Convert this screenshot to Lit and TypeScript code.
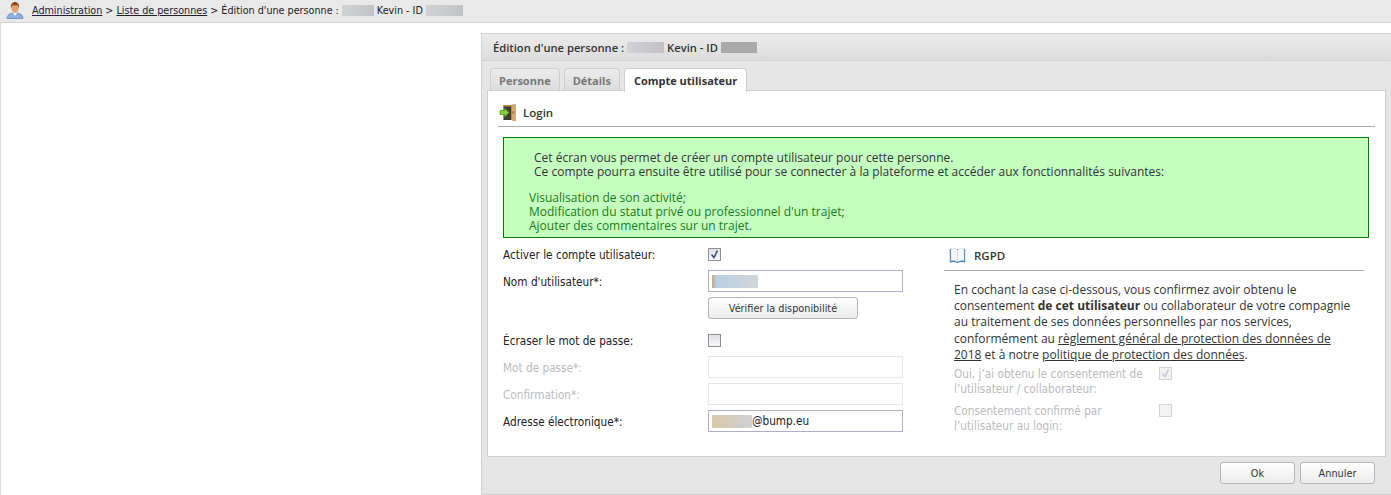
import { LitElement, html, css } from "lit";
import { customElement } from "lit/decorators.js";

@customElement("app-root")
export class AppRoot extends LitElement {
  static styles = css`
    :host { display: block; height: 495px; overflow: hidden; background: #fff; font-family: "Open Sans", sans-serif; font-size: 12px; color: #333; box-sizing: border-box; }
    * { box-sizing: border-box; }
    .crumb { height: 23px; background: #e9e9e9; border-bottom: 1px solid #d4d4d4; display: flex; align-items: center; gap: 8px; padding: 0 0 2px 6px; font-family: "DejaVu Sans Condensed", "DejaVu Sans", sans-serif; font-stretch: condensed; font-size: 10.7px; color: #222; white-space: nowrap; }
    .crumb a { color: #223; text-decoration: underline; }
    .crumb .txt { display: flex; align-items: center; gap: 3px; }
    .blur { display: inline-block; height: 11px; background: linear-gradient(90deg, #d0d2d4, #c0c2c6); filter: blur(.7px); }
    .main { border-left: 1px solid #dedede; height: 472px; padding-top: 10px; }
    .panel { margin-left: 480px; height: 462px; background: #e6e6e6; border: 1px solid #d0d0d0; border-right: none; display: flex; flex-direction: column; }
    .phead { height: 27px; flex: none; padding-left: 11px; display: flex; align-items: center; gap: 3px; font-weight: 600; font-size: 11.2px; color: #333; background: linear-gradient(#ececec, #dcdcdc); border-bottom: 1px solid #d2d2d2; }
    .tabs { display: flex; gap: 4px; padding: 7px 0 0 8px; height: 30px; flex: none; }
    .tab { height: 23px; padding: 0 8px; border: 1px solid #cfcfcf; border-bottom: none; border-radius: 4px 4px 0 0; background: linear-gradient(#ececec,#dcdcdc); font-weight: 700; font-size: 11px; color: #777; line-height: 23px; }
    .tab.on { background: #fff; color: #333; height: 24px; padding: 0 9px; position: relative; z-index: 1; }
    .box { margin: -1px 5px 0 5px; height: 367px; flex: none; background: #fff; border: 1px solid #cfcfcf; padding: 0 10px; }
    .sect { height: 30px; display: flex; align-items: center; gap: 7px; border-bottom: 1px solid #aaa; font-weight: 600; font-size: 11.5px; color: #333; }
    .box > .sect { margin-top: 6px; padding: 2px 0 0 1px; }
    .note { margin: 10px 6px 0 5px; height: 101px; background: #c4ffc0; border: 1px solid #0a7a0a; color: #1a7a1a; font-size: 12px; line-height: 14px; padding: 13px 0 0 25px; }
    .note .dark { color: #333; padding-left: 5px; margin-bottom: 12px; }
    .cols { display: flex; margin-left: 5px; }
    .left { width: 400px; padding-top: 5px; font-family: "DejaVu Sans Condensed", "DejaVu Sans", sans-serif; font-stretch: condensed; font-size: 11.7px; color: #222; }
    .row { display: flex; align-items: center; height: 22px; margin-bottom: 5px; }
    .row label { width: 205px; flex: none; padding-top: 1px; }
    .row.off label { color: #bbb; }
    .cb { width: 13px; height: 13px; border: 1px solid #8e8f9c; background: linear-gradient(#e2e2e2,#f8f8f8); display: block; }
    .cb svg { display: block; }
    .cb.off { border-color: #d3d3d8; background: #f3f3f3; }
    .inp { width: 195px; height: 22px; border: 1px solid #aeaec8; background: #fff; padding-left: 3px; display: flex; align-items: center; }
    .off .inp { border-color: #e6e6ec; }
    .btn { height: 22px; border: 1px solid #b4b4b4; border-radius: 3px; background: linear-gradient(#fff,#ececec); display: flex; align-items: center; justify-content: center; font-family: "DejaVu Sans Condensed", "DejaVu Sans", sans-serif; font-stretch: condensed; font-size: 10.8px; color: #333; }
    .vbtn { width: 150px; margin: 0 0 10px 205px; }
    .right { width: 420px; margin-left: 41px; }
    .right .sect { height: 30px; margin-top: 3px; padding-left: 5px; gap: 8px; }
    .rtext { margin: 11px 10px 0 10px; line-height: 16.2px; font-size: 12px; color: #333; }
    .rtext u { text-underline-offset: 1px; }
    .rr { display: flex; margin: 4px 0 0 10px; color: #bbb; font-family: "DejaVu Sans Condensed", "DejaVu Sans", sans-serif; font-stretch: condensed; font-size: 11.7px; line-height: 14.5px; }
    .rr span { width: 205px; flex: none; }
    .rr.second { margin-top: 8px; }
    .foot { display: flex; justify-content: flex-end; gap: 5px; padding: 5px 16px 0 0; }
    .foot .btn { width: 75px; }
  `;

  render() {
    const check = html`<svg width="11" height="11" viewBox="0 0 11 11"><path d="M2.5 5.5 L5 8.5 L8.5 1.5" fill="none" stroke="#3c4f8e" stroke-width="1.6"/></svg>`;
    const checkOff = html`<svg width="11" height="11" viewBox="0 0 11 11"><path d="M2.5 5.5 L5 8.5 L8.5 1.5" fill="none" stroke="#c4c8dc" stroke-width="1.6"/></svg>`;
    return html`
      <div class="crumb">
        <svg width="18" height="18" viewBox="0 0 18 18"><path d="M1 17.500c.2-3.500 2.500-5.500 8-5.500s7.800 2 8 5.500z" fill="#8db0dc" stroke="#5b7db5" stroke-width=".7"/><path d="M6.500 11.500h5L9 15z" fill="#f5f5f5"/><ellipse cx="9" cy="7" rx="3.500" ry="4.800" fill="#e0a070"/><path d="M5 8C4.300 3 6.500 1 9 1s4.700 2 4 7c-.3-2-1-3.500-2-4-1.300.6-3 .6-4 0-1 .5-1.700 2-2 4z" fill="#93451f"/></svg>
        <span class="txt"><a>Administration</a> &gt; <a>Liste de personnes</a> &gt; Édition d'une personne : <span class="blur" style="width:32px"></span> Kevin - ID <span class="blur" style="width:37px"></span></span>
      </div>
      <div class="main">
      <div class="panel">
        <div class="phead">Édition d'une personne : <span class="blur" style="width:37px"></span> Kevin - ID <span class="blur" style="width:36px;background:#aaa"></span></div>
        <div class="tabs">
          <div class="tab">Personne</div><div class="tab">Détails</div><div class="tab on">Compte utilisateur</div>
        </div>
        <div class="box">
          <div class="sect">
            <svg width="17" height="17" viewBox="0 0 17 17"><rect x="4" y="1" width="9" height="15" fill="#b98a52"/><rect x="5" y="2.500" width="7" height="13.500" fill="#3d3d38"/><path d="M12.500 1 16.500 .5V17l-4-1z" fill="#d9a868" stroke="#a87a42" stroke-width=".5"/><rect x="13.500" y="7.500" width="1.200" height="2" fill="#8a5a20"/><path d="M1 6.500h4.500V4L10 8.500 5.500 13v-2.500H1z" fill="#86d13c" stroke="#4c8a1e" stroke-width=".7"/></svg>
            Login
          </div>
          <div class="note">
            <div class="dark">Cet écran vous permet de créer un compte utilisateur pour cette personne.<br>Ce compte pourra ensuite être utilisé pour se connecter à la plateforme et accéder aux fonctionnalités suivantes:</div>
            <div>Visualisation de son activité;<br>Modification du statut privé ou professionnel d'un trajet;<br>Ajouter des commentaires sur un trajet.</div>
          </div>
          <div class="cols">
            <div class="left">
              <div class="row"><label>Activer le compte utilisateur:</label><span class="cb">${check}</span></div>
              <div class="row"><label>Nom d'utilisateur*:</label><div class="inp"><span class="blur" style="width:46px;height:13px;background:linear-gradient(90deg,#c9a878,#b8d0e4 10%,#d4d6d8)"></span></div></div>
              <div class="btn vbtn">Vérifier la disponibilité</div>
              <div class="row"><label>Écraser le mot de passe:</label><span class="cb"></span></div>
              <div class="row off"><label>Mot de passe*:</label><div class="inp"></div></div>
              <div class="row off"><label>Confirmation*:</label><div class="inp"></div></div>
              <div class="row"><label>Adresse électronique*:</label><div class="inp"><span class="blur" style="width:40px;height:13px;background:linear-gradient(90deg,#d8c8a8,#d0d2d6)"></span>@bump.eu</div></div>
            </div>
            <div class="right">
              <div class="sect">
                <svg width="17" height="17" viewBox="0 0 17 17"><path d="M.8 2v13.500c3-1 5.500-.6 7.700.8 2.200-1.400 4.700-1.800 7.700-.8V2z" fill="#3f7fb8"/><path d="M2 1.500c2.500-.5 5 0 6.500 1.500V15c-1.500-1.300-4-1.800-6.500-1.300zM15 1.500c-2.500-.5-5 0-6.500 1.500V15c1.500-1.300 4-1.800 6.500-1.300z" fill="#f4f8fb" stroke="#c4d4e0" stroke-width=".5"/></svg>
                RGPD
              </div>
              <div class="rtext">En cochant la case ci-dessous, vous confirmez avoir obtenu le consentement <b>de cet utilisateur</b> ou collaborateur de votre compagnie au traitement de ses données personnelles par nos services, conformément au <u>règlement général de protection des données de 2018</u> et à notre <u>politique de protection des données</u>.</div>
              <div class="rr"><span>Oui, j’ai obtenu le consentement de<br>l’utilisateur / collaborateur:</span><i class="cb off">${checkOff}</i></div>
              <div class="rr second"><span>Consentement confirmé par<br>l’utilisateur au login:</span><i class="cb off"></i></div>
            </div>
          </div>
        </div>
        <div class="foot"><div class="btn">Ok</div><div class="btn">Annuler</div></div>
      </div>
      </div>
    `;
  }
}
